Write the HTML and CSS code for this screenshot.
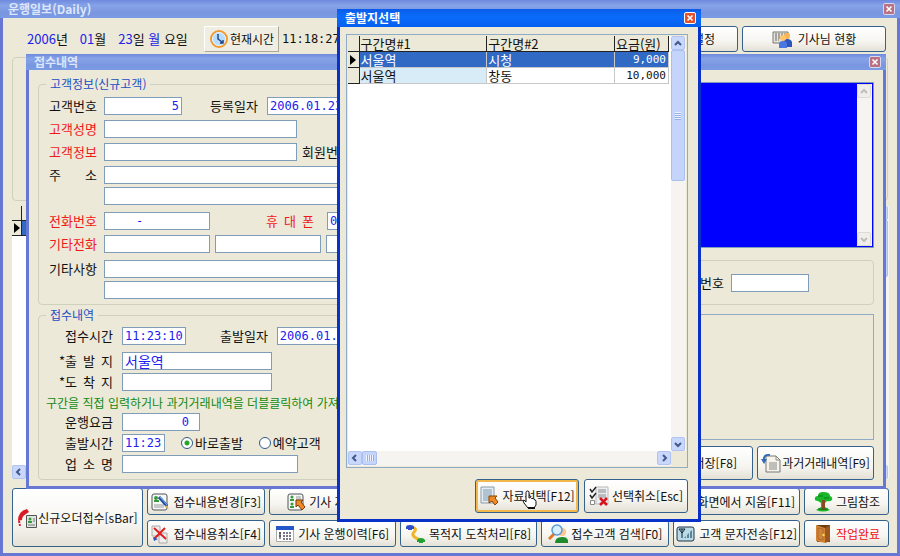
FILE: index.html
```
<!DOCTYPE html>
<html lang="ko">
<head>
    <meta charset="UTF-8">
    <title>운행일보(Daily)</title>
    <link rel="stylesheet" href="styles.css">
</head>
<body>
<div class="window daily">
    <div class="title">
        <h1>운행일보(Daily)</h1>
        <button class="close" aria-label="닫기"><svg viewBox="0 0 12 12"><path d="M3 3l6 6M9 3l-6 6"/></svg></button>
    </div>
    <div class="toolbar">
        <div class="date">
            <span><b>2006</b>년</span>
            <span><b>01</b>월</span>
            <span><b>23</b>일 <b>월</b> 요일</span>
        </div>
        <button class="btn flat">
            <svg class="icon" viewBox="0 0 20 20"><circle cx="10" cy="10" r="8" fill="#b8dcff" stroke="#f39a2c" stroke-width="2"/><circle cx="10" cy="10" r="6.5" fill="none" stroke="#e8f4ff"/><path d="M9 5v5l4 3M11 14l3 0v-3" fill="none" stroke="#16407c" stroke-width="1.4"/></svg>
            현재시간
        </button>
        <span class="clock">11:18:27</span>
        <button class="btn setting">설정</button>
        <button class="btn drivers">
            <svg class="icon" viewBox="0 0 20 20"><path d="M1 3h15v11H1z" fill="#e6e3d8" stroke="#777"/><path d="M3 5h11M3 7h9M3 9h5M3 11h4" stroke="#666" stroke-dasharray="2 1"/><circle cx="15" cy="7" r="3" fill="#ffb54f"/><path d="M11 18v-5q0-3 4-3t5 3v5z" fill="#2f55c0"/><circle cx="11" cy="9" r="3" fill="#ffc372"/><path d="M7 19v-4q0-3 4-3t4 3v4z" fill="#4a78e0"/></svg>
            기사님 현황
        </button>
    </div>
    <div class="summary"></div>
    <div class="orders">
        <div class="orders-list">
            <div class="orders-head"><span></span></div>
            <div class="orders-row"><span class="mark"></span><i></i></div>
            <div class="orders-body"></div>
            <div class="hbar"><button class="arrow" aria-label="왼쪽"><svg viewBox="0 0 12 12"><path d="M7 3L4 6l3 3"/></svg></button></div>
        </div>
        <div class="vbar">
            <button class="arrow" aria-label="위"><svg viewBox="0 0 12 12"><path d="M3 8l3-3 3 3"/></svg></button>
            <div class="thumb"></div>
            <button class="arrow" aria-label="아래"><svg viewBox="0 0 12 12"><path d="M3 5l3 3 3-3"/></svg></button>
        </div>
    </div>
    <div class="commands">
        <button class="btn new-order">
            <svg class="icon" viewBox="0 0 20 20"><path d="M1 13Q1 3 10 1l2 3-3 2q-4 2-4 6z" fill="#d81c24"/><path d="M2 13l1 5" stroke="#d81c24" stroke-dasharray="2 1" stroke-width="2"/><path d="M9.500 7.500h10v12h-10z" fill="#dfe6e2" stroke="#555"/><circle cx="13" cy="11" r="1.500" fill="#3a9a3a"/><path d="M11 13h4v2h-4z" fill="#3a9a3a"/><path d="M16 11h2M16 13h2M11 17h7" stroke="#777"/></svg>
            신규오더접수[sBar]
        </button>
        <button class="btn">
            <svg class="icon" viewBox="0 0 20 20"><rect x="2" y="2" width="15" height="16" rx="2" fill="#f4f6f8" stroke="#555"/><circle cx="6" cy="6" r="2" fill="#3a9a3a"/><path d="M4 8h5v2H4z" fill="#3a9a3a"/><path d="M4 13h10M4 15h10" stroke="#999"/><path d="M9 5l8 9" stroke="#1d4e9c" stroke-width="3"/><path d="M10 5l7 8" stroke="#7db1ef"/><path d="M16 13l3 4-4-2z" fill="#e8b050"/></svg>
            접수내용변경[F3]
        </button>
        <button class="btn">
            <svg class="icon" viewBox="0 0 20 20"><rect x="2" y="2" width="15" height="16" rx="2" fill="#f4f6f8" stroke="#555"/><circle cx="6" cy="5" r="1.500" fill="#3a9a3a"/><path d="M4 7h4v2H4z" fill="#3a9a3a"/><circle cx="6" cy="12" r="1.500" fill="#3a9a3a"/><path d="M4 14h4v2H4z" fill="#3a9a3a"/><path d="M10 5h5M10 7h5" stroke="#999"/><path d="M10 8h7l-2 2 4 5-3 3-4-5-2 2z" fill="#f08a24" stroke="#7a3a00"/></svg>
            기사 지정[F5]
        </button>
        <button class="btn clear-screen">화면에서 지움[F11]</button>
        <button class="btn pic">
            <svg class="icon" viewBox="0 0 20 20"><path d="M10 0q7 0 7 4 3 1 2 4-2 2-5 1l-2 2v4l5 3q-7 3-14 0l5-3v-4l-3-2Q1 9 2 6q0-2 3-2 0-4 5-4z" fill="#18b828"/><path d="M9 8h3v9l2 1H7l2-1z" fill="#8a4b20"/><path d="M5 4h5M11 6h5M5 17h10" stroke="#0d7a1c"/></svg>
            그림참조
        </button>
        <button class="btn">
            <svg class="icon" viewBox="0 0 20 20"><path d="M2 2h8v10H2zM9 9h8v10H9z" fill="#eee" stroke="#aaa"/><path d="M4 4l12 11M15 4L4 15" stroke="#e02020" stroke-width="2"/><path d="M3 13l1 4 4-2z" fill="#3050c0"/></svg>
            접수내용취소[F4]
        </button>
        <button class="btn">
            <svg class="icon" viewBox="0 0 20 20"><path d="M1.500 2.500h17v15h-17z" fill="#fff" stroke="#aaa"/><path d="M1 2h18v4H1z" fill="#2458c8"/><path d="M4 9h2M4 12h2M5 8v7" stroke="#222"/><path d="M8 9h9M8 12h9M8 15h9" stroke="#778" stroke-width="2" stroke-dasharray="2 1"/></svg>
            기사 운행이력[F6]
        </button>
        <button class="btn">
            <svg class="icon" viewBox="0 0 20 20"><path d="M5 3q7 1 3 5t6 8" fill="none" stroke="#f0b52c" stroke-width="3"/><path d="M0 3q0-2 4-2t4 2v2H6v1H2V5H0z" fill="#2c4fc8"/><path d="M11 16q1-2 4-2t4 2v2h-2v1h-4v-1h-2z" fill="#22a032"/></svg>
            목적지 도착처리[F8]
        </button>
        <button class="btn">
            <svg class="icon" viewBox="0 0 20 20"><circle cx="14" cy="8" r="4" fill="#ffc58a"/><path d="M7 19q0-6 7-6t6 6z" fill="#1d8a2b"/><path d="M6 10l-5 5" stroke="#e07a28" stroke-width="3"/><circle cx="9" cy="6" r="5" fill="#d7efff" stroke="#5a9ad8" stroke-width="1.500"/></svg>
            접수고객 검색[F0]
        </button>
        <button class="btn">
            <svg class="icon" viewBox="0 0 20 20"><rect x="1" y="3" width="17" height="14" rx="2" fill="#b9dbe8" stroke="#234"/><path d="M3 5h6L6 9zM6 5v9" fill="none" stroke="#123"/><path d="M8 14h8V6z" fill="#5d8496"/><path d="M10.500 8v7M13.500 8v7" stroke="#b9dbe8"/></svg>
            고객 문자전송[F12]
        </button>
        <button class="btn pic exit">
            <svg class="icon" viewBox="0 0 20 20"><path d="M4 1h13v17H4z" fill="#6d3c10"/><path d="M3 1l9 3v15l-9-2z" fill="#cf8438"/><path d="M12 4l5-3v16l-5 2z" fill="#99591f"/><path d="M5 4l5 1v11l-5-1z" fill="none" stroke="#b06a28"/><circle cx="10.500" cy="11" r="1.200" fill="#ffe04a"/></svg>
            작업완료
        </button>
    </div>
</div>

<div class="window receipt">
    <div class="title">
        <h2>접수내역</h2>
        <button class="close" aria-label="닫기"><svg viewBox="0 0 12 12"><path d="M3 3l6 6M9 3l-6 6"/></svg></button>
    </div>
    <div class="receipt-body">
        <form class="left">
            <fieldset class="customer">
                <legend>고객정보(신규고객)</legend>
                <div class="row">
                    <label for="no">고객번호</label><input id="no" class="w-no num" value="5">
                    <label for="regdate" class="far">등록일자</label><input id="regdate" class="w-tel" value="2006.01.23">
                </div>
                <div class="row"><label for="name" class="red">고객성명</label><input id="name" class="w-name"></div>
                <div class="row">
                    <label for="info" class="red">고객정보</label><input id="info" class="w-name">
                    <label for="member">회원번호</label><input id="member" class="w-short">
                </div>
                <div class="row"><label for="addr">주 소</label><input id="addr" class="grow"></div>
                <div class="row next"><input class="grow" aria-label="주소 2"></div>
                <div class="row gap">
                    <label for="tel" class="red">전화번호</label><input id="tel" class="w-tel" value="    -">
                    <label for="mobile" class="red phone">휴 대 폰</label><input id="mobile" class="w-tel" value="010">
                </div>
                <div class="row">
                    <label for="tel2" class="red">기타전화</label><input id="tel2" class="w-tel">
                    <input class="w-tel" aria-label="기타전화 2"><input class="w-tel" aria-label="기타전화 3">
                </div>
                <div class="row gap"><label for="etc">기타사항</label><input id="etc" class="grow"></div>
                <div class="row next"><input class="grow" aria-label="기타사항 2"></div>
            </fieldset>
            <fieldset class="trip">
                <legend>접수내역</legend>
                <div class="row">
                    <label for="rtime"><span>접수시간</span></label><input id="rtime" class="w-time" value="11:23:10">
                    <label for="sdate" class="plain">출발일자</label><input id="sdate" class="w-tel" value="2006.01.23">
                </div>
                <div class="row gap"><label for="from">*<span>출 발 지</span></label><input id="from" class="w-place" value="서울역"></div>
                <div class="row tight"><label for="to">*<span>도 착 지</span></label><input id="to" class="w-place"></div>
                <p class="hint">구간을 직접 입력하거나 과거거래내역을 더블클릭하여 가져옵니다</p>
                <div class="row tight"><label for="fare"><span>운행요금</span></label><input id="fare" class="w-no num fare" value="0"></div>
                <div class="row tight">
                    <label for="stime"><span>출발시간</span></label><input id="stime" class="w-short" value="11:23">
                    <label class="radio"><input type="radio" name="when" checked>바로출발</label>
                    <label class="radio"><input type="radio" name="when">예약고객</label>
                </div>
                <div class="row tight"><label for="shop"><span>업 소 명</span></label><input id="shop" class="w-shop"></div>
            </fieldset>
        </form>
        <div class="right">
            <div class="memo">
                <div class="vbar off">
                    <button class="arrow" aria-label="위"><svg viewBox="0 0 12 12"><path d="M3 8l3-3 3 3"/></svg></button>
                    <button class="arrow" aria-label="아래"><svg viewBox="0 0 12 12"><path d="M3 5l3 3 3-3"/></svg></button>
                </div>
            </div>
            <div class="group"><label for="code">번호</label><input id="code" class="w-no"></div>
            <div class="panel"></div>
            <div class="actions">
                <button class="btn save">저장[F8]</button>
                <button class="btn history">
                    <svg class="icon" viewBox="0 0 20 20"><path d="M5 3h10l4 4v12H5z" fill="#f6f4ea" stroke="#777"/><path d="M15 3v4h4M8 10h8M8 12h8M8 14h8M8 16h8" fill="none" stroke="#888"/><path d="M9 2Q2 1 3 8" fill="none" stroke="#2f6ab4" stroke-width="2"/><path d="M0 6h6l-3 5z" fill="#2f6ab4"/></svg>
                    과거거래내역[F9]
                </button>
            </div>
        </div>
    </div>
</div>

<div class="window dialog" role="dialog" aria-labelledby="pick">
    <div class="title">
        <h2 id="pick">출발지선택</h2>
        <button class="close" aria-label="닫기"><svg viewBox="0 0 12 12"><path d="M3 3l6 6M9 3l-6 6"/></svg></button>
    </div>
    <div class="dialog-body">
        <div class="list">
            <div class="list-view">
                <table>
                    <thead>
                    <tr><th class="c-mark"></th><th>구간명#1</th><th>구간명#2</th><th class="c-fare">요금(원)</th></tr>
                    </thead>
                    <tbody>
                    <tr class="selected"><td class="c-mark"><span class="mark"></span></td><td>서울역</td><td>시청</td><td class="c-fare">9,000</td></tr>
                    <tr><td class="c-mark"></td><td class="from">서울역</td><td>창동</td><td class="c-fare">10,000</td></tr>
                    </tbody>
                </table>
            </div>
            <div class="vbar">
                <button class="arrow" aria-label="위"><svg viewBox="0 0 12 12"><path d="M3 8l3-3 3 3"/></svg></button>
                <div class="thumb"><span></span></div>
                <button class="arrow" aria-label="아래"><svg viewBox="0 0 12 12"><path d="M3 5l3 3 3-3"/></svg></button>
            </div>
            <div class="hbar">
                <button class="arrow" aria-label="왼쪽"><svg viewBox="0 0 12 12"><path d="M7 3L4 6l3 3"/></svg></button>
                <div class="thumb"><span></span></div>
                <button class="arrow" aria-label="오른쪽"><svg viewBox="0 0 12 12"><path d="M5 3l3 3-3 3"/></svg></button>
            </div>
        </div>
        <div class="buttons">
            <button class="btn hot">
                <svg class="icon" viewBox="0 0 20 20"><path d="M2 1h13v16H2z" fill="#e4edf4" stroke="#8a9aa8"/><path d="M4 4h9M4 6h9M4 8h9M4 10h9M4 12h6M4 14h6" stroke="#7f98ad"/><path d="M10 10h8l-2 2 3 4-3 3-3-4-3 2z" fill="#f08a24" stroke="#8a4300"/></svg>
                자료선택[F12]
                <svg class="hand" viewBox="0 0 16 20"><path d="M4 12V2.500Q4 1 5.500 1T7 2.500V8q2-1 2.500.5Q11.500 8 12 9.500q2 0 2 2V15l-2 3H6l-4-5q-2-3 0-3z" fill="#fff" stroke="#111"/><path d="M6 17h7v2H6z" fill="#111"/></svg>
            </button>
            <button class="btn">
                <svg class="icon" viewBox="0 0 20 20"><path d="M7 1h12v17H7z" fill="#eceff2" stroke="#bbb"/><path d="M9 4h8M9 6h8M9 9h8M9 11h8" stroke="#888"/><path d="M1 3l2 3 4-5M1 9l2 3 4-5" fill="none" stroke="#222" stroke-width="1.500"/><path d="M1.500 14.500h4v4h-4z" fill="#fff" stroke="#888"/><path d="M11 12l7 7M18 12l-7 7" stroke="#d8141c" stroke-width="2.500"/></svg>
                선택취소[Esc]
            </button>
        </div>
    </div>
</div>
</body>
</html>
```
FILE: styles.css
```
*{
    margin: 0;
    padding: 0;
    box-sizing: border-box;
}
body{
    position: relative;
    min-height: 100vh;
    font: 13px/16px "Noto Sans CJK KR", sans-serif;
    color: #111;
    background: #ece9d8;
    overflow: hidden;
}
button, input{
    font: inherit;
    color: inherit;
}
.window{
    display: flex;
    flex-direction: column;
    background: #ece9d8;
    border: 3px solid #6778d4;
    border-top: 0;
}
.daily{
    min-height: 100vh;
}
/* 제목줄 */
.title{
    display: flex;
    align-items: center;
    justify-content: space-between;
    height: 18px;
    margin: 0 -3px;
    padding: 0 5px 0 8px;
    background: linear-gradient(#6f8ade, #86a3e8 30%, #7996e0 70%, #7a9be4);
}
.title h1, .title h2{
    font-size: 12px;
    line-height: 16px;
    color: #dde6fa;
}
.close{
    width: 12px;
    height: 12px;
    border: 1px solid #d8d8ee;
    border-radius: 2px;
    background: #b87082;
    line-height: 0;
}
.close svg{
    width: 10px;
    height: 10px;
    stroke: #fff;
    stroke-width: 2;
}
/* 버튼 */
.btn{
    display: flex;
    align-items: center;
    justify-content: center;
    gap: 3px;
    border: 1px solid #35618e;
    border-radius: 3px;
    background: linear-gradient(#fff, #f6f5f0 60%, #e4e1d6);
    font-size: 12px;
    white-space: nowrap;
}
.icon{
    width: 20px;
    height: 20px;
    flex: none;
}
.toolbar{
    display: flex;
    align-items: center;
    height: 26px;
    margin: 8px 11px 5px 24px;
}
.date{
    display: flex;
    gap: 12px;
    width: 177px;
    white-space: nowrap;
}
.date b{
    font-weight: normal;
    color: #2222e8;
}
.flat{
    width: 75px;
    height: 26px;
    border: 1px solid;
    border-color: #fff #aca899 #aca899 #fff;
    border-radius: 0;
    background: #f0eee2;
    gap: 1px;
}
.clock{
    flex: 1;
    padding-left: 3px;
    font: 12px "DejaVu Sans Mono", monospace;
}
.setting{
    width: 120px;
    height: 26px;
    margin-right: 4px;
    padding-right: 22px;
    justify-content: flex-end;
}
.drivers{
    width: 144px;
    height: 26px;
    gap: 6px;
}
.summary{
    height: 144px;
    margin: 0 9px 5px;
    border: 1px solid #d0d0bf;
    border-radius: 4px;
}
.orders{
    flex: 1;
    display: flex;
    margin: 0 8px 9px 9px;
    background: #fff;
}
.orders-list{
    flex: 1;
    display: flex;
    flex-direction: column;
}
.orders-head, .orders-row{
    display: flex;
    height: 15px;
    background: #ece9d8;
    border-bottom: 1px solid #222;
}
.orders-head span, .orders-row .mark{
    width: 10px;
    border-right: 1px solid #222;
}
.orders-row i{
    flex: 1;
    background: #316ac5;
}
.orders-body{
    flex: 1;
}
.mark{
    display: flex;
    align-items: center;
}
.mark::before{
    content: "";
    border: 5px solid transparent;
    border-left: 6px solid #000;
    border-right: 0;
    margin-left: 2px;
}
.commands{
    display: grid;
    grid-template-columns: 131fr 118fr 127fr 138fr 128fr 127fr 85fr;
    grid-template-rows: 27px 27px;
    gap: 5px 4px;
    margin: 0 8px 6px 9px;
}
.commands .btn{
    min-width: 0;
    overflow: hidden;
}
.commands .new-order{
    grid-row: span 2;
    gap: 1px;
}
.clear-screen{
    grid-column: 6;
}
.commands .clear-screen{
    justify-content: flex-end;
    padding-right: 4px;
}
.commands .exit{
    color: #f01010;
}
/* 접수내역 창 */
.receipt{
    position: absolute;
    left: 26px;
    right: 14px;
    top: 54px;
    bottom: 67px;
}
.receipt-body{
    flex: 1;
    display: grid;
    grid-template-columns: 1fr 1fr;
    gap: 8px;
    padding: 8px 9px;
}
.left, .right{
    display: flex;
    flex-direction: column;
    min-width: 0;
}
.left{
    gap: 4px;
}
fieldset{
    min-width: 0;
    border: 1px solid #d0d0bf;
    border-radius: 4px;
    padding: 6px 10px;
}
.customer{
    padding: 7px 10px 5px;
}
legend{
    padding: 0 4px;
    margin-left: -3px;
    font-size: 12px;
    line-height: 12px;
    color: #1c4fc4;
}
.row{
    display: flex;
    align-items: center;
    height: 18px;
    margin-bottom: 5px;
    white-space: nowrap;
}
.row.next, .row.tight{
    margin-top: -2px;
}
.row.gap{
    margin-top: 7px;
}
.row:last-child{
    margin-bottom: 0;
}
.row input, .group input{
    height: 18px;
    min-width: 0;
    flex: none;
    padding: 0 2px;
    border: 1px solid #7f9db9;
    background: #fff;
    color: #2020f0;
    font: 12px "DejaVu Sans Mono", "Noto Sans CJK KR", monospace;
}
.row label{
    flex: none;
}
.customer .row label{
    width: 48px;
    margin-right: 7px;
    text-align-last: justify;
}
.customer .row input + label{
    margin-left: 5px;
}
.customer .row input + .far{
    margin-left: 28px;
    margin-right: 9px;
}
.customer .row input + .phone{
    margin-left: 56px;
    margin-right: 13px;
}
.customer .row input + input{
    margin-left: 5px;
}
.customer .row.next input{
    margin-left: 55px;
}
.red{
    color: #f01818;
}
.row .w-no, .group .w-no{
    width: 78px;
}
.row .w-name{
    width: 193px;
}
.row .w-tel{
    width: 106px;
}
.row .w-time{
    width: 64px;
}
.row .w-short{
    width: 43px;
}
.row .w-place{
    width: 150px;
}
.row .w-shop{
    width: 176px;
}
.row .grow{
    flex: 1;
}
.row .num{
    text-align: right;
}
.row .fare{
    padding-right: 10px;
}
.trip .row label:first-child{
    display: flex;
    justify-content: flex-end;
    width: 64px;
    margin-right: 9px;
}
.trip .row label span{
    width: 48px;
    text-align-last: justify;
}
.trip .row .plain{
    margin: 0 9px 0 34px;
}
.trip .row .radio{
    display: flex;
    align-items: center;
    gap: 2px;
    margin-left: 16px;
}
.row .radio input{
    appearance: none;
    width: 12px;
    height: 12px;
    padding: 0;
    border: 1px solid #2c5a86;
    border-radius: 50%;
}
.row .radio input:checked{
    background: radial-gradient(#22a822 0 2px, #fff 3px);
}
#from{
    font-size: 14px;
}
.hint{
    margin: 0 0 5px -3px;
    font-size: 12px;
    line-height: 14px;
    color: #128a12;
    white-space: nowrap;
}
.right{
    padding-top: 4px;
}
.memo{
    height: 166px;
    display: flex;
    justify-content: flex-end;
    border: 1px solid #7f9db9;
    background: #00f;
    padding: 1px;
}
.group{
    display: flex;
    align-items: center;
    justify-content: flex-end;
    gap: 7px;
    height: 45px;
    margin: 12px 0 9px;
    padding-right: 64px;
    border: 1px solid #d0d0bf;
    border-radius: 4px;
}
.panel{
    flex: 1;
    border: 1px solid #8fabc6;
}
.actions{
    display: flex;
    justify-content: flex-end;
    gap: 4px;
    margin-top: 6px;
}
.actions .btn, .buttons .btn{
    height: 34px;
}
.actions .save{
    width: 110px;
    padding-right: 15px;
    justify-content: flex-end;
}
.actions .history{
    width: 117px;
    gap: 1px;
}
/* 스크롤바 */
.vbar, .hbar{
    display: flex;
    background: #f5f4f0;
}
.vbar{
    flex-direction: column;
    width: 15px;
}
.arrow{
    width: 14px;
    height: 14px;
    flex: none;
    border: 1px solid #b0c4f2;
    border-radius: 2px;
    background: #c8d7fb;
    line-height: 0;
}
.arrow svg{
    width: 12px;
    height: 12px;
    fill: none;
    stroke: #40598c;
    stroke-width: 2;
}
.vbar .arrow:last-child{
    margin-top: auto;
}
.hbar .arrow:last-child:not(:first-child){
    margin-left: auto;
}
.off .arrow{
    background: #efeeea;
    border-color: #dddbd2;
}
.off .arrow svg{
    stroke: #c0bfb8;
}
.thumb{
    display: flex;
    align-items: center;
    justify-content: center;
    border: 1px solid #a9bff0;
    border-radius: 2px;
    background: #c4d4fb;
}
.vbar .thumb{
    width: 14px;
    height: 131px;
}
.orders .vbar .thumb{
    height: 57px;
}
.vbar .thumb span{
    width: 6px;
    height: 8px;
    background: repeating-linear-gradient(#eef3ff 0 1px, #94aee8 1px 2px);
}
.hbar .thumb{
    width: 15px;
    height: 14px;
}
.hbar .thumb span{
    width: 8px;
    height: 6px;
    background: repeating-linear-gradient(90deg, #eef3ff 0 1px, #94aee8 1px 2px);
}
/* 출발지선택 창 */
.dialog{
    position: absolute;
    left: 337px;
    top: 9px;
    bottom: 34px;
    width: 364px;
    border-color: #0831c8;
}
.dialog .title{
    background: linear-gradient(#0a5be8, #0a6cfa 40%, #0560f0);
}
.dialog .title h2{
    color: #fff;
}
.dialog .close{
    border-color: #fff;
    background: #e2502c;
}
.dialog-body{
    flex: 1;
    display: flex;
    flex-direction: column;
    padding: 7px 10px 6px 6px;
}
.list{
    flex: 1;
    display: grid;
    grid-template-columns: 1fr 15px;
    grid-template-rows: 1fr 15px;
    border: 1px solid #8fabc6;
    padding: 1px;
}
.list-view{
    background: #fff;
    padding-right: 2px;
}
table{
    width: 100%;
    table-layout: fixed;
    border-collapse: collapse;
}
th, td{
    padding: 0 1px;
    line-height: 15px;
    text-align: left;
    font-weight: normal;
    border-right: 1px solid #c8c8c8;
    border-bottom: 1px solid #c8c8c8;
    white-space: nowrap;
}
th{
    background: #ece9d8;
    border-color: #222;
}
.c-mark{
    width: 11px;
    padding: 0;
    background: #ece9d8;
    border-color: #222;
}
.c-fare{
    width: 54px;
}
td.c-fare{
    padding-right: 2px;
    text-align: right;
    font: 11px/15px "DejaVu Sans Mono", monospace;
}
.selected td:not(.c-mark){
    background: #316ac5;
    color: #fff;
}
.from{
    background: #d8ecf8;
}
.buttons{
    display: flex;
    justify-content: flex-end;
    gap: 5px;
    margin-top: 11px;
}
.buttons .btn{
    width: 104px;
    position: relative;
}
.buttons .hot{
    box-shadow: inset 0 0 0 2px #f3b84c;
}
.hand{
    position: absolute;
    left: 46px;
    top: 10px;
    width: 16px;
    height: 20px;
}
```
